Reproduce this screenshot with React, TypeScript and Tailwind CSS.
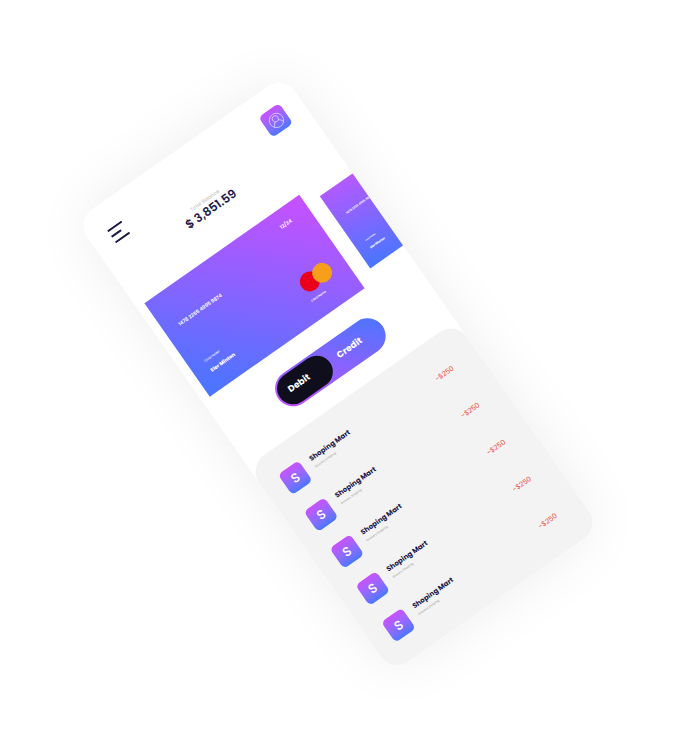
const items = [
  { name: "Shoping Mart", kind: "Grocery Shoping", amount: "-$250" },
  { name: "Shoping Mart", kind: "Grocery Shoping", amount: "-$250" },
  { name: "Shoping Mart", kind: "Grocery Shoping", amount: "-$250" },
  { name: "Shoping Mart", kind: "Grocery Shoping", amount: "-$250" },
  { name: "Shoping Mart", kind: "Grocery Shoping", amount: "-$250" },
];

function MenuIcon() {
  return (
    <svg width="18" height="16" viewBox="0 0 18 16" stroke="#1d1a4b" strokeWidth="2" strokeLinecap="round" aria-hidden="true">
      <path d="M1 1h15.500M1 7.800h10M1 14.600h15.500" />
    </svg>
  );
}

function UserIcon() {
  return (
    <svg width="16" height="16" viewBox="0 0 16 16" fill="none" stroke="#fff" strokeOpacity="0.75" strokeWidth="0.7" aria-hidden="true">
      <circle cx="8" cy="8" r="7.2" />
      <circle cx="8" cy="6" r="3.1" />
      <path d="M2.8 13c.6-2.500 2-4 3.600-4.400M13.200 13c-.6-2.500-2-4-3.600-4.400" />
    </svg>
  );
}

function Header() {
  return (
    <header className="flex items-start justify-between px-5 pt-5">
      <button type="button" aria-label="Menu" className="mt-1.5">
        <MenuIcon />
      </button>
      <div className="mt-[34px] flex flex-col items-center pr-3">
        <span className="text-[5px] leading-[8px] text-[#b8b8b8]">Total Balance</span>
        <span className="text-[12px] leading-[12px] font-semibold text-[#1d1a4b]">$ 3,851.59</span>
      </div>
      <button
        type="button"
        aria-label="Profile"
        className="flex size-[25px] items-center justify-center rounded-[5px] bg-linear-to-b from-[#c850ff] to-[#4776ff]"
      >
        <UserIcon />
      </button>
    </header>
  );
}

function Cards() {
  return (
    <section className="mt-[33px] flex items-center gap-4 pl-[9px]">
      <article className="flex h-[114px] w-[189px] shrink-0 justify-between bg-[linear-gradient(45deg,#4776ff,#c850ff)] py-3 pr-[15px] pl-4 text-white">
        <div className="flex flex-col pt-[22px]">
          <span className="text-[5px] leading-[8px] font-semibold">1478 2255 4995 9874</span>
          <span className="mt-[37px] text-[3px] leading-[6px] font-medium">Card Holder</span>
          <span className="mt-[5px] text-[5px] leading-[8px] font-extrabold">Eler Minton</span>
        </div>
        <div className="flex w-9 flex-col pt-px">
          <span className="self-end pr-1.5 text-[5px] leading-[8px] font-semibold">12/24</span>
          <div className="mt-[46px] flex">
            <span className="size-5 rounded-full bg-[#eb001b]" />
            <span className="-ml-[5px] size-5 rounded-full bg-[#f79e1b]" />
          </div>
          <span className="mt-1 text-[3px] leading-[6px] font-semibold">Card Name</span>
        </div>
      </article>
      <article className="flex h-[88px] flex-1 flex-col bg-[linear-gradient(15deg,#4776ff,#b858ff)] pt-[26px] pl-3 text-white">
        <span className="text-[3px] leading-[6px] font-semibold whitespace-nowrap">1478 2255 4995 9874</span>
        <span className="mt-[29px] text-[2px] leading-[4px] font-semibold">Card Holder</span>
        <span className="mt-[3px] text-[3px] leading-[6px] font-extrabold whitespace-nowrap">Eler Minton</span>
      </article>
    </section>
  );
}

function Toggle() {
  return (
    <div className="mx-auto mt-[23px] grid w-1/2 grid-cols-2 rounded-full bg-[linear-gradient(45deg,#c850ff,#4776ff)] p-0.5 text-[9px] font-bold text-white">
      <button type="button" className="h-8 rounded-full bg-[#0f0e1c] pl-3 text-left">
        Debit
      </button>
      <button type="button" className="h-8 pl-2.5 text-left">
        Credit
      </button>
    </div>
  );
}

function Transactions() {
  return (
    <ul className="mt-5 flex flex-1 flex-col gap-5 rounded-t-[20px] bg-[#f3f3f3] px-5 pt-6">
      {items.map((item, i) => (
        <li key={i} className="flex h-[25px] items-center">
          <span className="flex size-[25px] items-center justify-center rounded-[5px] bg-linear-to-b from-[#c850ff] to-[#4776ff] text-[13px] font-medium text-white">
            S
          </span>
          <div className="ml-2.5 flex flex-col pb-2">
            <span className="text-[7px] leading-[11px] font-bold text-[#1d1a4b]">{item.name}</span>
            <span className="mt-px text-[3px] leading-[6px] text-[#999]">{item.kind}</span>
          </div>
          <span className="mr-[9px] ml-auto text-[7px] leading-[10px] text-[#ec4a3a]">{item.amount}</span>
        </li>
      ))}
    </ul>
  );
}

export default function App() {
  return (
    <main className="flex min-h-screen items-center justify-center overflow-hidden bg-white pt-0.5 pl-0.5 font-['Poppins','Inter',sans-serif]">
      <div className="flex h-[552px] w-[254px] -rotate-35 flex-col overflow-hidden rounded-[20px] bg-white shadow-[0_0_60px_rgba(0,0,0,0.07)]">
        <Header />
        <Cards />
        <Toggle />
        <Transactions />
      </div>
    </main>
  );
}
